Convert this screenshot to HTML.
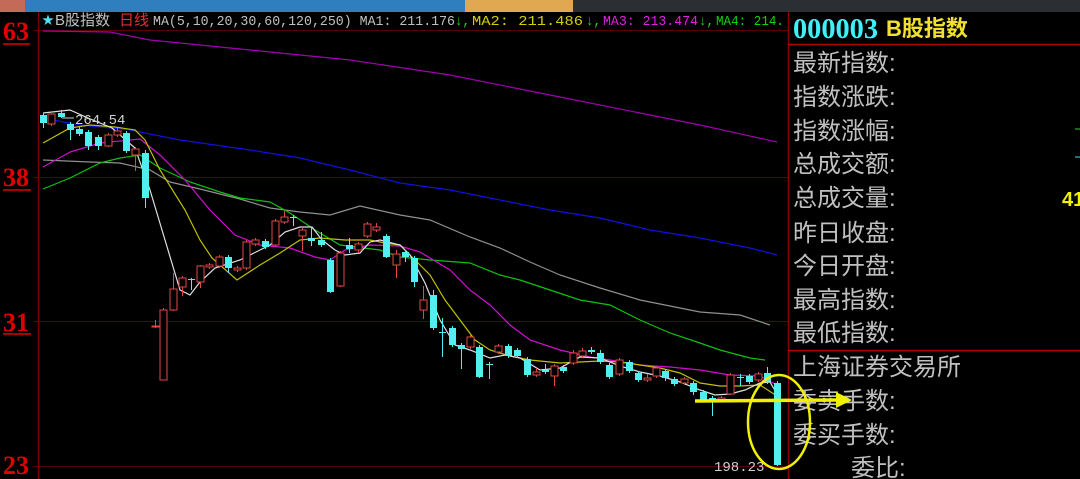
<!DOCTYPE html>
<html><head><meta charset="utf-8"><style>
html,body{margin:0;padding:0;background:#000;width:1080px;height:479px;overflow:hidden}
svg{display:block}
.cn{font-family:"Liberation Sans","Noto Sans CJK SC",sans-serif}
</style></head><body>
<svg width="1080" height="479" viewBox="0 0 1080 479" xmlns="http://www.w3.org/2000/svg">
<rect width="1080" height="479" fill="#000"/>
<rect x="0" y="0" width="1080" height="12" fill="#2b2e33"/>
<rect x="0" y="0" width="25" height="12" fill="#c46a58"/>
<rect x="25" y="0" width="440" height="12" fill="#2f7fbf"/>
<rect x="465" y="0" width="108" height="12" fill="#e0a850"/>
<g stroke="#5a0000" stroke-width="1">
<line x1="34" y1="30.5" x2="788" y2="30.5"/>
<line x1="34" y1="177.5" x2="788" y2="177.5"/>
<line x1="34" y1="321.5" x2="788" y2="321.5"/>
<line x1="34" y1="466.5" x2="788" y2="466.5"/>
</g>
<line x1="38.5" y1="12" x2="38.5" y2="479" stroke="#7a0000" stroke-width="1.5"/>
<line x1="788.5" y1="12" x2="788.5" y2="479" stroke="#8a0000" stroke-width="1.5"/>
<line x1="788" y1="44.5" x2="1080" y2="44.5" stroke="#b00000" stroke-width="1.5"/>
<line x1="788" y1="350.5" x2="1080" y2="350.5" stroke="#b00000" stroke-width="1.5"/>
<g fill="#e00000" font-family="Liberation Serif,serif" font-weight="bold" font-size="26">
<text x="3" y="40">63</text><text x="3" y="186">38</text><text x="3" y="331">31</text><text x="3" y="474">23</text>
</g>
<g stroke="#e00000" stroke-width="1.5">
<line x1="3" y1="44" x2="30" y2="44"/><line x1="3" y1="190" x2="31" y2="190"/><line x1="3" y1="334" x2="31" y2="334"/>
</g>
<text x="42" y="24" font-size="12" fill="#50e0f0" class="cn">★</text>
<text x="55" y="25" font-size="15" fill="#c0c0c0" class="cn">B股指数</text>
<text x="119" y="25" font-size="15" fill="#e03030" class="cn">日线</text>
<g font-family="Liberation Mono,monospace" font-size="14">
<text x="153" y="25" fill="#c0c0c0" textLength="302" lengthAdjust="spacingAndGlyphs">MA(5,10,20,30,60,120,250) MA1: 211.176</text>
<text x="455" y="25" fill="#30d030" textLength="15" lengthAdjust="spacingAndGlyphs">↓,</text>
<text x="472" y="25" fill="#d0d000" textLength="111" lengthAdjust="spacingAndGlyphs">MA2: 211.486</text>
<text x="586" y="25" fill="#30d030" textLength="15" lengthAdjust="spacingAndGlyphs">↓,</text>
<text x="603" y="25" fill="#e020e0" textLength="95" lengthAdjust="spacingAndGlyphs">MA3: 213.474</text>
<text x="699" y="25" fill="#30d030" textLength="15" lengthAdjust="spacingAndGlyphs">↓,</text>
<text x="716" y="25" fill="#10d010" textLength="68" lengthAdjust="spacingAndGlyphs">MA4: 214.</text>
</g>
<text x="793" y="38" font-family="Liberation Serif,serif" font-weight="bold" font-size="28" fill="#40f0f8" textLength="85" lengthAdjust="spacingAndGlyphs">000003</text>
<text x="886" y="36" font-size="22" fill="#f0e030" class="cn" font-weight="bold">B股指数</text>
<g font-size="24" fill="#c0c0c0" class="cn">
<text x="793" y="71">最新指数:</text>
<text x="793" y="105">指数涨跌:</text>
<text x="793" y="139">指数涨幅:</text>
<text x="793" y="172">总成交额:</text>
<text x="793" y="206">总成交量:</text>
<text x="793" y="241">昨日收盘:</text>
<text x="793" y="274">今日开盘:</text>
<text x="793" y="308">最高指数:</text>
<text x="793" y="341">最低指数:</text>
<text x="793" y="375">上海证券交易所</text>
<text x="793" y="409">委卖手数:</text>
<text x="793" y="443">委买手数:</text>
<text x="851" y="476">委比:</text>
</g>
<line x1="1075" y1="129" x2="1080" y2="129" stroke="#30d030"/>
<line x1="1075" y1="157" x2="1080" y2="157" stroke="#40e0f0"/>
<text x="1062" y="206" font-family="Liberation Sans,sans-serif" font-weight="bold" font-size="20" fill="#f0f000">41</text>
<g fill="none" stroke-width="1.2">
<polyline stroke="#a000b0" points="43,31 110,32 150,40 250,50 350,60 450,75 550,95 650,115 700,125 777,142"/>
<polyline stroke="#1010e0" points="43,118 80,125 130,130 180,140 250,150 300,158 350,170 400,183 450,190 500,200 550,210 600,218 650,230 700,238 750,248 777,255"/>
<polyline stroke="#909090" points="43,160 90,162 120,163 150,170 170,182 200,189 240,199 270,208 300,212 330,215 360,206 400,215 430,220 470,237 500,248 530,262 560,275 600,288 640,300 700,312 740,315 770,325"/>
<polyline stroke="#10c010" points="43,189 70,178 100,163 120,158 140,155 160,168 190,182 220,192 240,198 270,202 290,213 315,230 340,245 380,250 400,257 430,260 470,263 500,275 520,280 550,290 580,300 610,305 640,320 670,333 700,343 720,350 750,358 765,360"/>
<polyline stroke="#d010d0" points="43,167 70,152 100,143 130,140 140,139 160,155 185,180 210,210 235,235 260,245 290,248 315,257 330,260 345,250 370,245 400,246 420,252 430,258 450,270 470,290 490,305 510,325 530,340 560,350 590,357 610,360 640,365 670,367 700,370 730,375 760,376 777,385"/>
<polyline stroke="#c0c000" points="43,143 70,128 90,125 115,127 135,130 145,140 160,170 185,210 200,240 212,258 237,280 260,265 280,253 300,240 320,238 345,240 370,240 385,243 400,245 415,260 430,275 445,300 460,320 475,340 490,350 510,356 530,360 560,363 600,361 620,362 640,365 660,368 680,373 700,383 720,386 740,386 760,385 777,396"/>
<polyline stroke="#e0e0e0" points="43,113 70,110 88,118 112,128 135,148 150,190 165,240 180,290 190,295 200,282 215,268 240,260 270,245 285,232 300,227 312,227 322,240 335,250 345,255 360,253 370,242 380,240 400,245 410,255 425,283 440,320 455,345 470,350 490,358 505,355 520,358 540,370 560,368 580,357 600,358 620,366 640,372 660,376 680,382 700,390 715,395 730,394 745,390 760,383 770,382 777,394"/>
</g>
<g id="c" stroke-width="1"></g>
<text x="75" y="124" font-family="Liberation Mono,monospace" font-size="14" fill="#d0d0d0">264.54</text>
<line x1="62" y1="118" x2="74" y2="118" stroke="#d0d0d0"/>
<text x="714" y="471" font-family="Liberation Mono,monospace" font-size="14" fill="#d0d0d0">198.23</text>
<ellipse cx="779" cy="422" rx="31" ry="47" fill="none" stroke="#f0f000" stroke-width="2.5"/>
<line x1="695" y1="401" x2="838" y2="400" stroke="#f0f000" stroke-width="3.5"/>
<polygon points="836,392 852,400 836,408" fill="#f0f000"/>
</svg>
<script>
var C=[[43,'c',115,123,113,128],[51,'r',114,124,112,126],[61,'c',113,117,110,118],[70,'c',124,130,122,140],[79,'c',129,134,127,136],[88,'c',132,146,130,150],[98,'c',137,146,135,150],[108,'r',135,146,133,147],[117,'r',131,135,128,137],[126,'c',133,151,131,153],[135,'r',149,155,147,171],[145,'c',153,198,150,208],[155,'r',326,327,320,328],[163,'r',310,380,308,380],[173,'r',289,310,273,311],[182,'r',278,287,276,296],[191,'c',279,280,278,290],[200,'r',266,282,265,288],[209,'r',265,267,263,269],[219,'r',257,266,255,268],[228,'c',257,268,255,273],[237,'r',268,270,266,272],[246,'r',242,268,240,270],[255,'r',240,244,238,246],[265,'c',241,247,239,249],[275,'r',221,245,219,247],[284,'r',217,222,211,224],[293,'c',217,218,215,226],[302,'r',230,236,228,251],[311,'c',238,241,228,246],[321,'c',240,245,232,247],[330,'c',260,292,258,293],[340,'r',253,286,251,287],[349,'c',245,249,238,253],[358,'r',244,250,242,253],[367,'r',224,236,222,238],[376,'r',227,230,223,232],[386,'c',236,257,234,258],[396,'r',254,265,250,278],[405,'c',252,257,250,262],[414,'c',258,282,256,287],[423,'r',300,310,286,319],[433,'c',295,328,290,330],[442,'c',332,333,318,357],[452,'c',328,345,326,347],[461,'c',345,349,343,369],[470,'r',337,347,335,349],[479,'c',347,377,345,378],[489,'c',364,365,362,379],[498,'r',346,352,344,354],[508,'c',346,356,344,358],[517,'c',350,356,348,358],[527,'c',359,375,357,377],[536,'r',372,375,368,377],[545,'c',370,372,364,374],[554,'r',366,376,364,386],[563,'c',367,371,365,373],[573,'r',353,363,350,365],[582,'r',351,356,348,358],[591,'c',350,352,347,354],[600,'c',353,362,350,364],[609,'c',365,377,363,379],[619,'r',360,374,358,376],[629,'c',362,371,360,373],[638,'c',373,380,371,382],[647,'r',378,380,374,382],[656,'r',368,376,366,378],[665,'c',371,378,369,381],[674,'c',379,384,377,386],[684,'r',379,383,377,385],[693,'c',383,392,381,395],[703,'c',392,400,390,402],[712,'c',398,402,396,416],[721,'r',398,400,396,402],[730,'r',375,394,373,395],[740,'c',377,378,374,386],[749,'c',376,382,374,384],[758,'r',374,380,372,382],[767,'c',373,382,367,384],[777,'c',383,465,381,466]];
var g=document.getElementById('c'),s='';
C.forEach(function(k){var x=k[0],col=k[1]=='c'?'#50f0f0':'#e04848';
s+='<line x1="'+(x+.5)+'" y1="'+k[4]+'" x2="'+(x+.5)+'" y2="'+k[5]+'" stroke="'+col+'"/>';
var h=Math.max(1,k[3]-k[2]);
if(k[1]=='c')s+='<rect x="'+(x-3)+'" y="'+k[2]+'" width="7" height="'+h+'" fill="'+col+'"/>';
else s+='<rect x="'+(x-3)+'" y="'+k[2]+'" width="7" height="'+h+'" fill="#000" stroke="'+col+'"/>';});
g.innerHTML=s;
</script>
</body></html>
